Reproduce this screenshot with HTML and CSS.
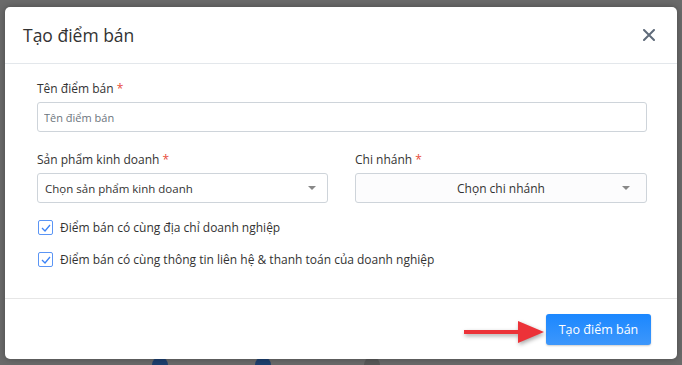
FILE: index.html
```html
<!DOCTYPE html>
<html lang="vi">
<head>
    <meta charset="UTF-8">
    <title>Tạo điểm bán</title>
    <link rel="stylesheet" href="styles.css">
</head>
<body>
    <div class="backdrop-dots">
        <span class="dot dot-blue dot-1"></span>
        <span class="dot dot-blue dot-2"></span>
        <span class="dot dot-grey dot-3"></span>
    </div>
    <div class="modal">
        <div class="modal-header">
            <h2>Tạo điểm bán</h2>
            <button class="close-btn" aria-label="Đóng">
                <svg width="12" height="12" viewBox="0 0 12 12"><path d="M1 1 L11 11 M11 1 L1 11" stroke="#5f6b7a" stroke-width="2" stroke-linecap="round"/></svg>
            </button>
        </div>
        <div class="modal-body">
            <div class="field">
                <label>Tên điểm bán <span class="req">*</span></label>
                <input type="text" class="text-input" placeholder="Tên điểm bán">
            </div>
            <div class="row">
                <div class="field">
                    <label>Sản phẩm kinh doanh <span class="req">*</span></label>
                    <div class="select">
                        <span>Chọn sản phẩm kinh doanh</span>
                        <span class="caret"></span>
                    </div>
                </div>
                <div class="field">
                    <label>Chi nhánh <span class="req">*</span></label>
                    <div class="select select-center">
                        <span>Chọn chi nhánh</span>
                        <span class="caret"></span>
                    </div>
                </div>
            </div>
            <div class="check">
                <span class="box"><svg width="10" height="8" viewBox="0 0 10 8"><path d="M1 4 L4 7 L9 1" fill="none" stroke="#3b82f6" stroke-width="1.3"/></svg></span>
                Điểm bán có cùng địa chỉ doanh nghiệp
            </div>
            <div class="check">
                <span class="box"><svg width="10" height="8" viewBox="0 0 10 8"><path d="M1 4 L4 7 L9 1" fill="none" stroke="#3b82f6" stroke-width="1.3"/></svg></span>
                Điểm bán có cùng thông tin liên hệ &amp; thanh toán của doanh nghiệp
            </div>
        </div>
        <div class="modal-footer">
            <svg class="arrow" width="96" height="34" viewBox="0 0 96 34">
                <path d="M4 15 L58 15 L58 6 L84 17 L58 28 L58 19 L4 19 Z" fill="#ec3238"/>
            </svg>
            <button class="primary-btn">Tạo điểm bán</button>
        </div>
    </div>
</body>
</html>
```

FILE: styles.css
```css
/* Modal styles */
body {
    font-family: "Open Sans", "Noto Sans", sans-serif;
    background-color: #6a6a6a;
    margin: 0;
    padding: 7px 5px;
    color: #343a40;
    position: relative;
    height: 365px;
    box-sizing: border-box;
    overflow: hidden;
}

.backdrop-dots .dot {
    position: absolute;
    width: 16px;
    height: 16px;
    border-radius: 50%;
    top: 357px;
}

.dot-blue {
    background-color: #1d3f6e;
}

.dot-grey {
    background-color: #585858;
}

.dot-1 { left: 152px; }
.dot-2 { left: 255px; }
.dot-3 { left: 364px; }

.modal {
    position: relative;
    width: 672px;
    background-color: #fff;
    border-radius: 5px;
    box-shadow: 0 0 6px rgba(0, 0, 0, 0.3);
}

.modal-header {
    display: flex;
    align-items: center;
    justify-content: space-between;
    height: 56px;
    padding: 0 22px 0 18px;
    border-bottom: 1px solid #e3e7eb;
}

.modal-header h2 {
    margin: 0;
    font-size: 17.5px;
    font-weight: 400;
    color: #333;
}

.close-btn {
    background: none;
    border: none;
    padding: 0;
    display: flex;
    cursor: pointer;
}

.modal-body {
    padding: 16px 30px 30px 32px;
    border-bottom: 1px solid #e6e6e6;
}

.field {
    display: flex;
    flex-direction: column;
}

label {
    font-size: 12px;
    color: #333;
    margin-bottom: 5px;
}

.req {
    color: #e74c3c;
}

.text-input {
    height: 30px;
    border: 1px solid #ced4da;
    border-radius: 3px;
    padding: 0 6px;
    font-family: inherit;
    font-size: 11px;
    box-sizing: border-box;
}

.text-input::placeholder {
    color: #6c757d;
}

.row {
    display: grid;
    grid-template-columns: 291px 292px;
    column-gap: 27px;
    margin-top: 19px;
}

.select {
    display: flex;
    align-items: center;
    justify-content: space-between;
    height: 30px;
    border: 1px solid #ced4da;
    border-radius: 3px;
    padding: 0 7px 0 7px;
    font-size: 11.5px;
    color: #333;
    box-sizing: border-box;
    position: relative;
}

.select-center {
    justify-content: center;
    background-color: #fcfcfd;
    font-size: 12px;
}

.select-center .caret {
    position: absolute;
    right: 12px;
}

.caret {
    width: 0;
    height: 0;
    border-left: 4px solid transparent;
    border-right: 4px solid transparent;
    border-top: 4px solid #888;
    margin-right: 4px;
}

.check {
    display: flex;
    align-items: center;
    gap: 7px;
    font-size: 12px;
    color: #333;
    margin-top: 16px;
    padding-left: 1px;
}

.check + .check {
    margin-top: 15px;
}

.box {
    width: 13px;
    height: 13px;
    border: 1px solid #5b95f5;
    border-radius: 2px;
    display: flex;
    align-items: center;
    justify-content: center;
}

.modal-footer {
    display: flex;
    justify-content: flex-end;
    align-items: center;
    height: 60px;
    padding-right: 26px;
    position: relative;
}

.primary-btn {
    background-color: #2b8ffc;
    background-image: linear-gradient(#1b87ff, #3d97fb);
    color: #fff;
    border: none;
    border-radius: 3px;
    width: 105px;
    height: 31px;
    font-family: inherit;
    font-size: 12.5px;
    cursor: pointer;
    box-shadow: 0 1px 2px rgba(0, 0, 0, 0.2);
}

.arrow {
    position: absolute;
    left: 455px;
    top: 16px;
    filter: drop-shadow(1px 2px 2px rgba(0, 0, 0, 0.35));
}
```
